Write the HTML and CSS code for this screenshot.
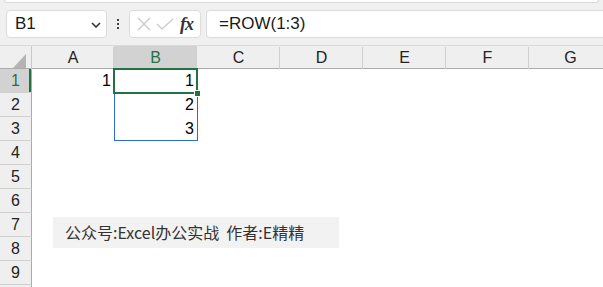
FILE: index.html
```html
<!DOCTYPE html>
<html lang="zh-CN">
<head>
    <meta charset="UTF-8">
    <title>ROW(1:3)</title>
    <link rel="stylesheet" href="styles.css">
</head>
<body>
    <div class="ribbon-edge"></div>

    <!-- Formula bar -->
    <div class="formula-bar">
        <div class="name-box">
            <span>B1</span>
            <svg class="chevron" width="10" height="6" viewBox="0 0 10 6"><path d="M1 1 L5 5 L9 1" fill="none" stroke="#333" stroke-width="1.6"/></svg>
        </div>
        <div class="grip"><i></i><i></i><i></i></div>
        <div class="fx-box">
            <svg width="16" height="16" viewBox="0 0 16 16"><path d="M2 2 L14 14 M14 2 L2 14" stroke="#c8c8c8" stroke-width="1.2"/></svg>
            <svg width="18" height="16" viewBox="0 0 18 16"><path d="M1 8 L6 13 L17 3" fill="none" stroke="#c8c8c8" stroke-width="1.2"/></svg>
            <span class="fx">fx</span>
        </div>
        <div class="formula">=ROW(1:3)</div>
    </div>

    <!-- Sheet -->
    <div class="sheet">
        <div class="row head">
            <div class="corner"><span class="tri"></span></div>
            <div class="col">A</div>
            <div class="col active">B</div>
            <div class="col">C</div>
            <div class="col">D</div>
            <div class="col">E</div>
            <div class="col">F</div>
            <div class="col">G</div>
        </div>
        <div class="row">
            <div class="rh active">1</div>
            <div class="cell">1</div><div class="cell">1</div><div class="cell"></div><div class="cell"></div><div class="cell"></div><div class="cell"></div><div class="cell"></div>
        </div>
        <div class="row">
            <div class="rh">2</div>
            <div class="cell"></div><div class="cell">2</div><div class="cell"></div><div class="cell"></div><div class="cell"></div><div class="cell"></div><div class="cell"></div>
        </div>
        <div class="row">
            <div class="rh">3</div>
            <div class="cell"></div><div class="cell">3</div><div class="cell"></div><div class="cell"></div><div class="cell"></div><div class="cell"></div><div class="cell"></div>
        </div>
        <div class="row"><div class="rh">4</div></div>
        <div class="row"><div class="rh">5</div></div>
        <div class="row"><div class="rh">6</div></div>
        <div class="row"><div class="rh">7</div></div>
        <div class="row"><div class="rh">8</div></div>
        <div class="row"><div class="rh">9</div></div>
        <div class="row"><div class="rh"></div></div>

        <!-- overlays -->
        <div class="range"></div>
        <div class="selection"><span class="handle"></span></div>
        <div class="note">公众号:Excel办公实战&nbsp;&nbsp;作者:E精精</div>
    </div>
</body>
</html>
```

FILE: styles.css
```css
* {
    margin: 0;
    padding: 0;
    box-sizing: border-box;
}

body {
    font-family: 'Liberation Sans', Arial, sans-serif;
    background: #f0f0f0;
    width: 603px;
    height: 287px;
    overflow: hidden;
    color: #222;
}

.ribbon-edge { height: 3px; margin: 0 4px; background: #fff; border: 1px solid #d9d9d9; border-top: none; border-radius: 0 0 6px 6px; }

/* formula bar */
.formula-bar { display: flex; align-items: center; height: 28px; margin: 7px 0 7px 6px; }
.name-box { width: 101px; height: 28px; background: #fff; border: 1px solid #dcdcdc; border-radius: 4px; display: flex; align-items: center; justify-content: space-between; padding: 0 5px 0 8px; font-size: 17px; color: #1a1a1a; }
.chevron { margin-top: 2px; }
.grip { width: 22px; display: flex; flex-direction: column; align-items: center; gap: 2px; }
.grip i { width: 2px; height: 2px; background: #444; }
.fx-box { width: 72px; height: 28px; background: #fff; border: 1px solid #dcdcdc; border-radius: 4px; display: flex; align-items: center; gap: 4px; padding: 0 0 0 6px; }
.fx { font-family: 'Liberation Serif', serif; font-style: italic; font-weight: bold; font-size: 18px; color: #333; margin-left: 2px; letter-spacing: -1px; }
.formula { flex: 1; height: 28px; margin-left: 5px; background: #fff; border: 1px solid #dcdcdc; border-right: none; border-radius: 4px 0 0 4px; padding: 2px 0 0 12px; font-size: 17px; color: #1a1a1a; line-height: 22px; }

/* sheet */
.sheet { position: relative; height: 242px; overflow: hidden; background: #fff; border-top: 1px solid #dadada; }
.row { display: grid; grid-template-columns: 32px 82px repeat(6, 83px); height: 24px; }
.row.head { height: 23px; background: #efefef; border-bottom: 1px solid #ababab; }
.corner { border-right: 1px solid #c8c8c8; position: relative; }
.tri { position: absolute; right: 5px; bottom: 2px; width: 0; height: 0; border-left: 13px solid transparent; border-bottom: 14px solid #b4b4b4; }
.col { text-align: center; font-size: 16px; line-height: 24px; position: relative; }
.col::after { content: ""; position: absolute; right: 0; top: 1px; bottom: 1px; width: 1px; background: #d0d0d0; }
.col.active { background: #d2d2d2; color: #217346; box-shadow: inset 0 -2px 0 #217346; }
.rh { background: #efefef; border-right: 1px solid #ababab; border-bottom: 1px solid #d0d0d0; text-align: center; font-size: 16px; line-height: 23px; }
.rh.active { background: #d2d2d2; color: #217346; box-shadow: inset -2px 0 0 #217346; }
.cell { text-align: right; padding-right: 3px; font-size: 16px; line-height: 24px; color: #000; }

.range { position: absolute; left: 114px; top: 23px; width: 84px; height: 72px; border: 1px solid #2b6cd0; }
.selection { position: absolute; left: 113px; top: 22px; width: 85px; height: 26px; border: 2px solid #217346; }
.handle { position: absolute; right: -5px; bottom: -5px; width: 7px; height: 7px; background: #217346; border: 1px solid #fff; }

.note { position: absolute; left: 53px; top: 171px; width: 286px; height: 31px; background: #f2f2f2; padding-left: 12px; font-family: 'Noto Sans CJK SC', sans-serif; font-size: 16px; line-height: 31px; color: #333; white-space: nowrap; }
```
